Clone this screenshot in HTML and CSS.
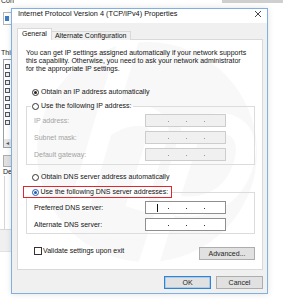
FILE: index.html
```html
<!DOCTYPE html>
<html>
<head>
<meta charset="utf-8">
<link rel="stylesheet" href="styles.css">
</head>
<body>
<div class="desk">
  <div class="bg-win">
    <div class="bg-head"><span class="bg-clip"><span class="bg-label bg-co">Connect using:</span></span><span class="bg-topbar"></span></div>
    <div class="bg-col">
      <div class="bg-adapter"><span class="bg-nic"></span></div>
      <div class="bg-label bg-th">This connection uses the following items:</div>
      <div class="bg-list">
        <div class="bg-item"><span class="bg-chk"></span></div>
        <div class="bg-item"><span class="bg-chk"></span></div>
        <div class="bg-item"><span class="bg-chk"></span></div>
        <div class="bg-item"><span class="bg-chk"></span></div>
        <div class="bg-item"><span class="bg-chk"></span></div>
        <div class="bg-item"><span class="bg-chk"></span></div>
        <div class="bg-item"><span class="bg-chk"></span></div>
        <div class="bg-item"><span class="bg-chk"></span></div>
        <div class="bg-hscroll">&#9666;</div>
      </div>
      <div class="bg-btn"></div>
      <div class="bg-desc"><span class="bg-label bg-dlabel">Description</span></div>
      <div class="bg-footer"></div>
    </div>
  </div>

  <div class="dialog">
    <div class="titlebar">
      <span class="title">Internet Protocol Version 4 (TCP/IPv4) Properties</span>
      <svg class="close" width="8" height="8" viewBox="0 0 8 8"><path d="M1 1L7 7M7 1L1 7" stroke="#333" stroke-width="0.9" fill="none"/></svg>
    </div>
    <div class="tabs">
      <div class="tab active">General</div>
      <div class="tab">Alternate Configuration</div>
    </div>
    <div class="panel">
      <svg class="watermark" width="246" height="231" viewBox="0 0 246 231">
        <circle cx="130" cy="113" r="110" fill="#f8f8f8"/>
        <g stroke="#ffffff" stroke-width="20" fill="none" stroke-linecap="butt">
          <path d="M112 0 L62 170"/>
          <path d="M86 90 C110 70 150 72 140 100 L118 170"/>
          <path d="M178 80 L130 230"/>
          <path d="M168 96 C210 70 240 90 225 130 C212 165 180 172 150 165"/>
        </g>
      </svg>
      <div class="panel-body">
        <p class="desc">You can get IP settings assigned automatically if your network supports<br>this capability. Otherwise, you need to ask your network administrator<br>for the appropriate IP settings.</p>
        <div class="opt opt-first"><span class="radio checked"></span>Obtain an IP address automatically</div>
        <fieldset class="group disabled">
          <legend class="opt"><span class="radio"></span>Use the following IP address:</legend>
          <div class="row"><span class="lbl">IP address:</span><span class="ip"><i></i><i></i><i></i></span></div>
          <div class="row"><span class="lbl">Subnet mask:</span><span class="ip"><i></i><i></i><i></i></span></div>
          <div class="row"><span class="lbl">Default gateway:</span><span class="ip"><i></i><i></i><i></i></span></div>
        </fieldset>
        <div class="opt opt-dns"><span class="radio"></span>Obtain DNS server address automatically</div>
        <fieldset class="group group-dns">
          <legend class="opt highlight"><span class="radio checked focus"></span>Use the following DNS server addresses:</legend>
          <div class="row"><span class="lbl">Preferred DNS server:</span><span class="ip enabled"><b class="caret"></b><i></i><i></i><i></i></span></div>
          <div class="row"><span class="lbl">Alternate DNS server:</span><span class="ip enabled"><i></i><i></i><i></i></span></div>
        </fieldset>
        <div class="bottom-row">
          <div class="check"><span class="box"></span>Validate settings upon exit</div>
          <button class="btn adv">Advanced...</button>
        </div>
      </div>
    </div>
    <div class="actions">
      <button class="btn default">OK</button>
      <button class="btn">Cancel</button>
    </div>
  </div>
</div>
</body>
</html>
```

FILE: styles.css
```css
* { box-sizing: border-box; margin: 0; padding: 0; }
html, body { width: 283px; height: 300px; overflow: hidden; }
body {
  font-family: "Liberation Sans", Arial, sans-serif;
  font-size: 7px;
  color: #141414;
  background: #fff;
}
.desk { position: relative; width: 283px; height: 300px; overflow: hidden; background: #fff; }

/* background window (only its left strip shows) */
.bg-win { display: flex; flex-direction: column; }
.bg-head { display: flex; justify-content: space-between; height: 6px; }
.bg-clip { width: 14px; height: 6px; overflow: hidden; padding-left: 1px; }
.bg-label { font-size: 7px; line-height: 8px; color: #222; white-space: nowrap; }
.bg-co { display: block; margin-top: -3px; }
.bg-topbar { width: 61px; height: 3px; background: #cfcfcf; }
.bg-col { width: 11px; overflow: hidden; display: flex; flex-direction: column; padding-left: 1px; }
.bg-adapter { margin: 6px 0 0 2px; width: 120px; height: 13px; border: 1px solid #b5b5b5; display: flex; align-items: center; padding-left: 1px; flex: none; }
.bg-nic { width: 4px; height: 5px; background: #3d7cc9; }
.bg-th { margin-top: 24px; }
.bg-list { margin: 2px 0 0 2px; width: 160px; height: 89px; border: 1px solid #9aa0a8; display: flex; flex-direction: column; padding-top: 2px; flex: none; }
.bg-item { height: 8px; display: flex; align-items: center; padding-left: 1px; }
.bg-chk { width: 5px; height: 5px; border: 1px solid #555; background: #e8f0fa; }
.bg-hscroll { margin-top: auto; height: 8px; background: #e6e6e6; font-size: 6px; line-height: 8px; color: #555; padding-left: 2px; }
.bg-btn { margin: 7px 0 0 2px; width: 60px; height: 12px; background: #e1e1e1; border: 1px solid #adadad; flex: none; }
.bg-desc { margin: 5px 0 0 3px; width: 120px; height: 57px; border-left: 1px solid #d5d5d5; border-top: 1px solid #d5d5d5; flex: none; }
.bg-dlabel { display: block; margin: -5px 0 0 -2px; background: #fff; width: 40px; }
.bg-footer { width: 120px; height: 23px; background: #f0f0f0; border-top: 1px solid #d8d8d8; border-bottom: 1px solid #e2e2e2; margin-left: -1px; flex: none; }

/* dialog */
.dialog {
  position: absolute;
  left: 11px; top: 8px;
  width: 257px; height: 286px;
  border: 1px solid #7fb0e2;
  background: #f0f0f0;
  box-shadow: 0 0 6px rgba(0,0,0,0.12);
  display: flex; flex-direction: column;
}
.titlebar { height: 14px; background: #fff; display: flex; align-items: flex-start; justify-content: space-between; padding: 1px 5px 0 6px; }
.title { font-size: 7.3px; line-height: 8px; color: #111; white-space: nowrap; }

.tabs { display: flex; align-items: flex-end; margin: 5px 0 -1px 5px; position: relative; z-index: 2; }
.tab { height: 9px; line-height: 8px; padding: 0 3px; border: 1px solid #d9d9d9; border-bottom: none; background: #f0f0f0; white-space: nowrap; }
.tab.active { height: 12px; background: #fff; padding: 1px 4px 0 4px; margin-right: -1px; position: relative; z-index: 3; }

.panel { position: relative; margin: 0 4px 0 5px; height: 231px; border: 1px solid #d9d9d9; background: #fff; overflow: hidden; }
.watermark { position: absolute; left: -1px; top: -1px; z-index: 0; }
.panel-body { position: relative; z-index: 1; padding: 9px 7px 0 8px; display: flex; flex-direction: column; }

.desc { line-height: 8px; white-space: nowrap; }
.opt { display: flex; align-items: center; height: 8px; line-height: 8px; white-space: nowrap; padding-left: 6px; }
.opt-first { margin-top: 15px; }
.opt-dns { margin-top: 8px; }
.radio { width: 7px; height: 7px; border: 1px solid #333; border-radius: 50%; background: #fff; margin-right: 2px; display: flex; align-items: center; justify-content: center; flex: none; }
.radio.checked::after { content: ""; width: 3px; height: 3px; border-radius: 50%; background: #222; }
.radio.focus { border-color: #1c5fb0; }
.radio.focus::after { background: #1c5fb0; }

.group { border: 1px solid #dcdcdc; margin-top: 6px; padding: 4px 7px 3px 7px; min-width: 0; display: flex; flex-direction: column; gap: 4px; }
.group legend.opt { padding: 0 1px; margin-left: -3px; }
.group-dns { margin-top: 5px; padding: 3px 7px 2px 7px; }
.group-dns legend.highlight { border: 1.5px solid #e3262b; padding: 0.5px 3px 0.5px 7.5px; margin-left: -11px; height: 12px; }

.row { display: flex; align-items: center; height: 13px; }
.lbl { width: 111px; white-space: nowrap; }
.disabled .lbl { color: #a3a3a3; }
.ip { width: 81px; height: 13px; border: 1px solid #cdcdcd; background: #f0f0f0; display: flex; align-items: center; padding: 2px 0 0 22px; gap: 17px; position: relative; }
.ip i { width: 1px; height: 1px; background: #9a9a9a; }
.ip.enabled { background: #fff; border-color: #8f8f8f; }
.ip.enabled i { background: #333; }
.caret { position: absolute; left: 11px; top: 2px; width: 1px; height: 8px; background: #111; }

.bottom-row { display: flex; justify-content: space-between; align-items: flex-start; margin-top: 13px; padding-left: 8px; }
.check { display: flex; align-items: center; height: 8px; line-height: 8px; white-space: nowrap; }
.box { width: 8px; height: 8px; border: 1px solid #333; background: #fff; margin-right: 1px; }

.btn { font-family: inherit; font-size: 7px; color: #1e1e1e; height: 13px; line-height: 11px; background: #e1e1e1; border: 1px solid #adadad; padding: 0; }
.adv { width: 56px; }
.actions { display: flex; justify-content: flex-end; gap: 5px; margin: 6px 4px 0 0; }
.actions .btn { width: 47px; }
.btn.default { border: 1px solid #2f83d4; box-shadow: inset 0 0 0 0.5px #7db6ec; }
```
